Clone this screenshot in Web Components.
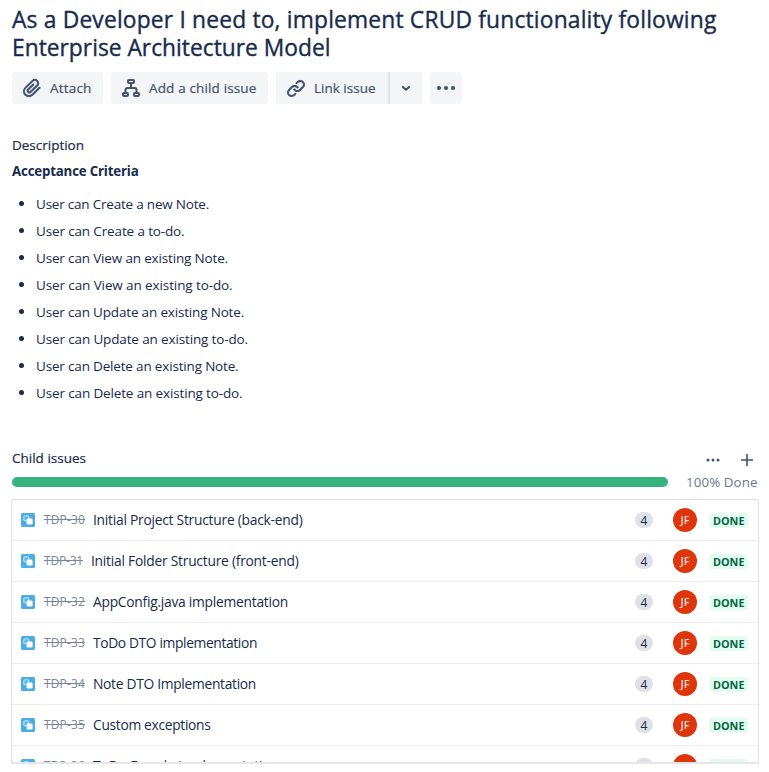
<!DOCTYPE html>
<html lang="en">
<head>
<meta charset="utf-8">
<title>Issue</title>
<style>
html,body{margin:0;background:#fff}
body{font-family:"Open Sans","Noto Sans",sans-serif;color:#172b4d;height:772px;overflow:hidden}
</style>
</head>
<body>
<issue-page></issue-page>
<script>
const define=(name,html,setup)=>{
  const t=document.createElement('template');t.innerHTML=html;
  customElements.define(name,class extends HTMLElement{
    connectedCallback(){
      if(this.shadowRoot)return;
      this.attachShadow({mode:'open'}).append(t.content.cloneNode(true));
      if(setup)setup(this,this.shadowRoot);
    }
  });
};

/* One line of text whose tracking is adjusted to a given advance width. */
define('fit-text','<style>:host{display:block;white-space:nowrap;width:max-content}span{display:inline-block;text-decoration:var(--line,none)}</style><span></span>',(el,r)=>{
  const s=r.querySelector('span');
  s.textContent=el.getAttribute('text');
  const w=+el.getAttribute('w'),n=s.textContent.length;
  if(w)s.style.letterSpacing=((w-s.getBoundingClientRect().width)/n)+'px';
});

const icons={
  attach:'<svg width="24" height="24" viewBox="0 0 24 24"><path fill="#42526e" stroke="#42526e" stroke-width=".1" d="M11.643 17.965c-1.53 1.495-4.016 1.496-5.542.004a3.773 3.773 0 0 1 .002-5.412l7.147-6.985a2.316 2.316 0 0 1 3.22.003 2.18 2.18 0 0 1 0 3.13l-6.66 6.51a.7.7 0 0 1-.965 0 .646.646 0 0 1 .002-.93l5.17-5.055a1 1 0 0 0-1.398-1.43l-5.17 5.055a2.646 2.646 0 0 0 0 3.79 2.7 2.7 0 0 0 3.76 0l6.66-6.51a4.18 4.18 0 0 0 0-5.99 4.315 4.315 0 0 0-6.016-.003l-7.149 6.986a5.773 5.773 0 0 0 0 8.272 5.926 5.926 0 0 0 8.339-.005l7.154-6.993a1 1 0 0 0-1.398-1.43z"/></svg>',
  child:'<svg width="24" height="24" viewBox="0 0 24 24" fill="none" stroke="#42526e" stroke-width="2"><rect x="9" y="4" width="6" height="3" rx="1"/><rect x="4" y="17" width="5" height="3" rx="1"/><rect x="15" y="17" width="5" height="3" rx="1"/><path d="M12 7v5M6.5 17v-3a2 2 0 0 1 2-2h7a2 2 0 0 1 2 2v3"/></svg>',
  link:'<svg width="24" height="24" viewBox="0 0 24 24" fill="#42526e" stroke="#42526e" stroke-width=".1"><path d="M12.856 5.457l-.937.92a1.002 1.002 0 0 0 0 1.437 1.047 1.047 0 0 0 1.463 0l.984-.966c.967-.95 2.542-1.135 3.602-.288a2.54 2.54 0 0 1 .203 3.81l-2.903 2.852a2.646 2.646 0 0 1-3.696 0l-1.11-1.09L9 13.57l1.108 1.089c1.822 1.788 4.802 1.788 6.622 0l2.905-2.852a4.558 4.558 0 0 0-.357-6.82c-1.893-1.517-4.695-1.226-6.422.47"/><path d="M11.144 19.543l.937-.92a1.002 1.002 0 0 0 0-1.437 1.047 1.047 0 0 0-1.462 0l-.985.966c-.967.95-2.542 1.135-3.602.288a2.54 2.54 0 0 1-.203-3.81l2.903-2.852a2.646 2.646 0 0 1 3.696 0l1.11 1.09L15 11.43l-1.108-1.089c-1.822-1.788-4.802-1.788-6.622 0l-2.905 2.852a4.558 4.558 0 0 0 .357 6.82c1.893 1.517 4.695 1.226 6.422-.47"/></svg>',
  down:'<svg width="24" height="24" viewBox="0 0 24 24"><path d="M8.9 10.9l3.1 2.9 3.1-2.9" fill="none" stroke="#42526e" stroke-width="2" stroke-linecap="round" stroke-linejoin="round"/></svg>',
  more:'<svg width="24" height="24" viewBox="0 0 24 24" fill="#42526e"><circle cx="5" cy="12" r="2.1"/><circle cx="12" cy="12" r="2.1"/><circle cx="19" cy="12" r="2.1"/></svg>',
  dots:'<svg width="24" height="24" viewBox="0 0 24 24" fill="#42526e"><circle cx="7" cy="12" r="1.5"/><circle cx="12" cy="12" r="1.5"/><circle cx="17" cy="12" r="1.5"/></svg>',
  plus:'<svg width="24" height="24" viewBox="0 0 24 24"><path d="M12 6v12M6 12h12" stroke="#42526e" stroke-width="1.6"/></svg>',
  subtask:'<svg width="14" height="14" viewBox="0 0 14 14"><rect width="14" height="14" rx="1.6" fill="#4bade8"/><rect x="2.8" y="2.8" width="5" height="5" rx="1.4" fill="#5fb7eb" stroke="#c4e4f8" stroke-width="1.1"/><rect x="5.6" y="5.6" width="6" height="6" rx="1.3" fill="#fff"/></svg>'
};
define('ui-icon','<style>:host{display:block;flex:none}svg{display:block}</style>',(el,r)=>{
  const t=document.createElement('template');t.innerHTML=icons[el.getAttribute('name')];r.append(t.content);
});

define('tool-button','<style>:host{display:flex;align-items:center;box-sizing:border-box;height:32px;background:#f4f5f7;border-radius:3px;padding:0 8px;gap:6px;color:#42526e;font-size:13.5px;-webkit-text-stroke:.2px;line-height:32px}</style><slot></slot>');

define('issue-row',`<style>
:host{display:flex;align-items:center;height:40px;border-bottom:1px solid #ebecf0;padding:0 10px 0 9px;font-size:13.8px}
.key{--line:line-through;margin-left:9px;color:#7a869a;font-size:12px;line-height:16px;width:max-content}
.title{flex:1;margin-left:8px;line-height:20px;padding-bottom:1px}
.count{width:18px;height:16px;border-radius:8px;background:#dfe1e6;font-size:12px;line-height:17px;text-align:center;margin-right:20px}
.avatar{width:24px;height:24px;border-radius:50%;background:#de350b;color:#f8dcd5;font-size:11px;font-weight:600;line-height:24px;text-align:center;margin-right:12px}
.done{box-sizing:border-box;width:39px;height:15px;padding-left:4px;border-radius:3px;background:#e3fcef;color:#006644;font-size:10.8px;font-weight:700;line-height:16px;margin-top:1px}
</style><ui-icon name="subtask"></ui-icon><div class="key"></div><div class="title"></div><div class="count">4</div><div class="avatar">JF</div><div class="done"><fit-text text="DONE" w="31.5"></fit-text></div>`,(el,r)=>{
  const add=(sel,text,w)=>{const f=document.createElement('fit-text');f.setAttribute('text',text);f.setAttribute('w',w);r.querySelector(sel).append(f)};
  add('.key',el.getAttribute('key'),el.getAttribute('kw'));
  add('.title',el.getAttribute('text'),el.getAttribute('w'));
});

const bullets=[['User can Create a new Note.',173],['User can Create a to-do.',148.5],['User can View an existing Note.',192],['User can View an existing to-do.',196.5],['User can Update an existing Note.',208],['User can Update an existing to-do.',212],['User can Delete an existing Note.',202.5],['User can Delete an existing to-do.',206.5]];
define('bullet-list','<style>:host{display:block}ul{list-style:none;margin:0;padding:0}li{display:flex;align-items:center;height:27px;font-size:13.5px;line-height:24px}i{width:5px;height:5px;border-radius:50%;background:#172b4d;margin:0 12px 0 7px}</style><ul>'+bullets.map(b=>`<li><i></i><fit-text text="${b[0]}" w="${b[1]}"></fit-text></li>`).join('')+'</ul>');

const rows=[['TDP-30',41,'Initial Project Structure (back-end)',209.5],['TDP-31',39,'Initial Folder Structure (front-end)',207.5],['TDP-32',41,'AppConfig.java implementation',195],['TDP-33',41,'ToDo DTO implementation',164],['TDP-34',41,'Note DTO Implementation',163],['TDP-35',41,'Custom exceptions',117.5],['TDP-36',41,'ToDo Facade implementation',186]];
define('issue-page',`<style>
:host{display:block;padding:6px 10px 0 12px}
h1{margin:0;font-size:22.8px;font-weight:400;-webkit-text-stroke:.35px;line-height:28px}
.tools{display:flex;gap:8px;margin-top:10px}
.pair{display:flex;gap:2px;background:#dfe1e6;border-radius:3px}
.pair tool-button:first-child{border-radius:3px 0 0 3px}
.pair tool-button:last-child{border-radius:0 3px 3px 0}
h2{margin:0;font-size:13.5px;font-weight:400;-webkit-text-stroke:.2px;line-height:20px}
.desc{margin-top:31px}
h3{margin:6px 0 0;font-size:13.3px;font-weight:700;line-height:20px}
bullet-list{margin-top:9px}
.head{display:flex;justify-content:space-between;align-items:center;margin-top:42px;height:20px}
.actions{display:flex;gap:10px;padding-top:4px}
.progress{display:flex;align-items:center;height:24px;margin-top:2px}
.bar{width:656px;height:10px;border-radius:5px;background:#36b37e;margin-right:18px}
.progress fit-text{color:#6b778c;font-size:13.3px}
.list{box-sizing:border-box;margin:5px -1px 0 -1px;width:748px;height:265px;overflow:hidden;border:1px solid #dfe1e6;border-bottom:2px solid #e6e7ed;border-radius:3px 3px 0 0}
</style>
<h1><fit-text text="As a Developer I need to, implement CRUD functionality following" w="704.5"></fit-text><fit-text text="Enterprise Architecture Model" w="318.5"></fit-text></h1>
<div class="tools">
<tool-button style="width:91px"><ui-icon name="attach"></ui-icon><fit-text text="Attach" w="41.5"></fit-text></tool-button>
<tool-button style="width:157px"><ui-icon name="child"></ui-icon><fit-text text="Add a child issue" w="107.5"></fit-text></tool-button>
<div class="pair"><tool-button style="width:112px"><ui-icon name="link"></ui-icon><fit-text text="Link issue" w="61.5"></fit-text></tool-button><tool-button style="width:32px;padding:0 4px"><ui-icon name="down"></ui-icon></tool-button></div>
<tool-button style="width:32px;padding:0 4px"><ui-icon name="more"></ui-icon></tool-button>
</div>
<h2 class="desc"><fit-text text="Description" w="72"></fit-text></h2>
<h3><fit-text text="Acceptance Criteria" w="126.5"></fit-text></h3>
<bullet-list></bullet-list>
<div class="head"><h2><fit-text text="Child issues" w="74"></fit-text></h2><div class="actions"><ui-icon name="dots"></ui-icon><ui-icon name="plus"></ui-icon></div></div>
<div class="progress"><div class="bar"></div><fit-text text="100% Done" w="71.5"></fit-text></div>
<div class="list">${rows.map(r=>`<issue-row key="${r[0]}" kw="${r[1]}" text="${r[2]}" w="${r[3]}"></issue-row>`).join('')}</div>`);
</script>
</body>
</html>
